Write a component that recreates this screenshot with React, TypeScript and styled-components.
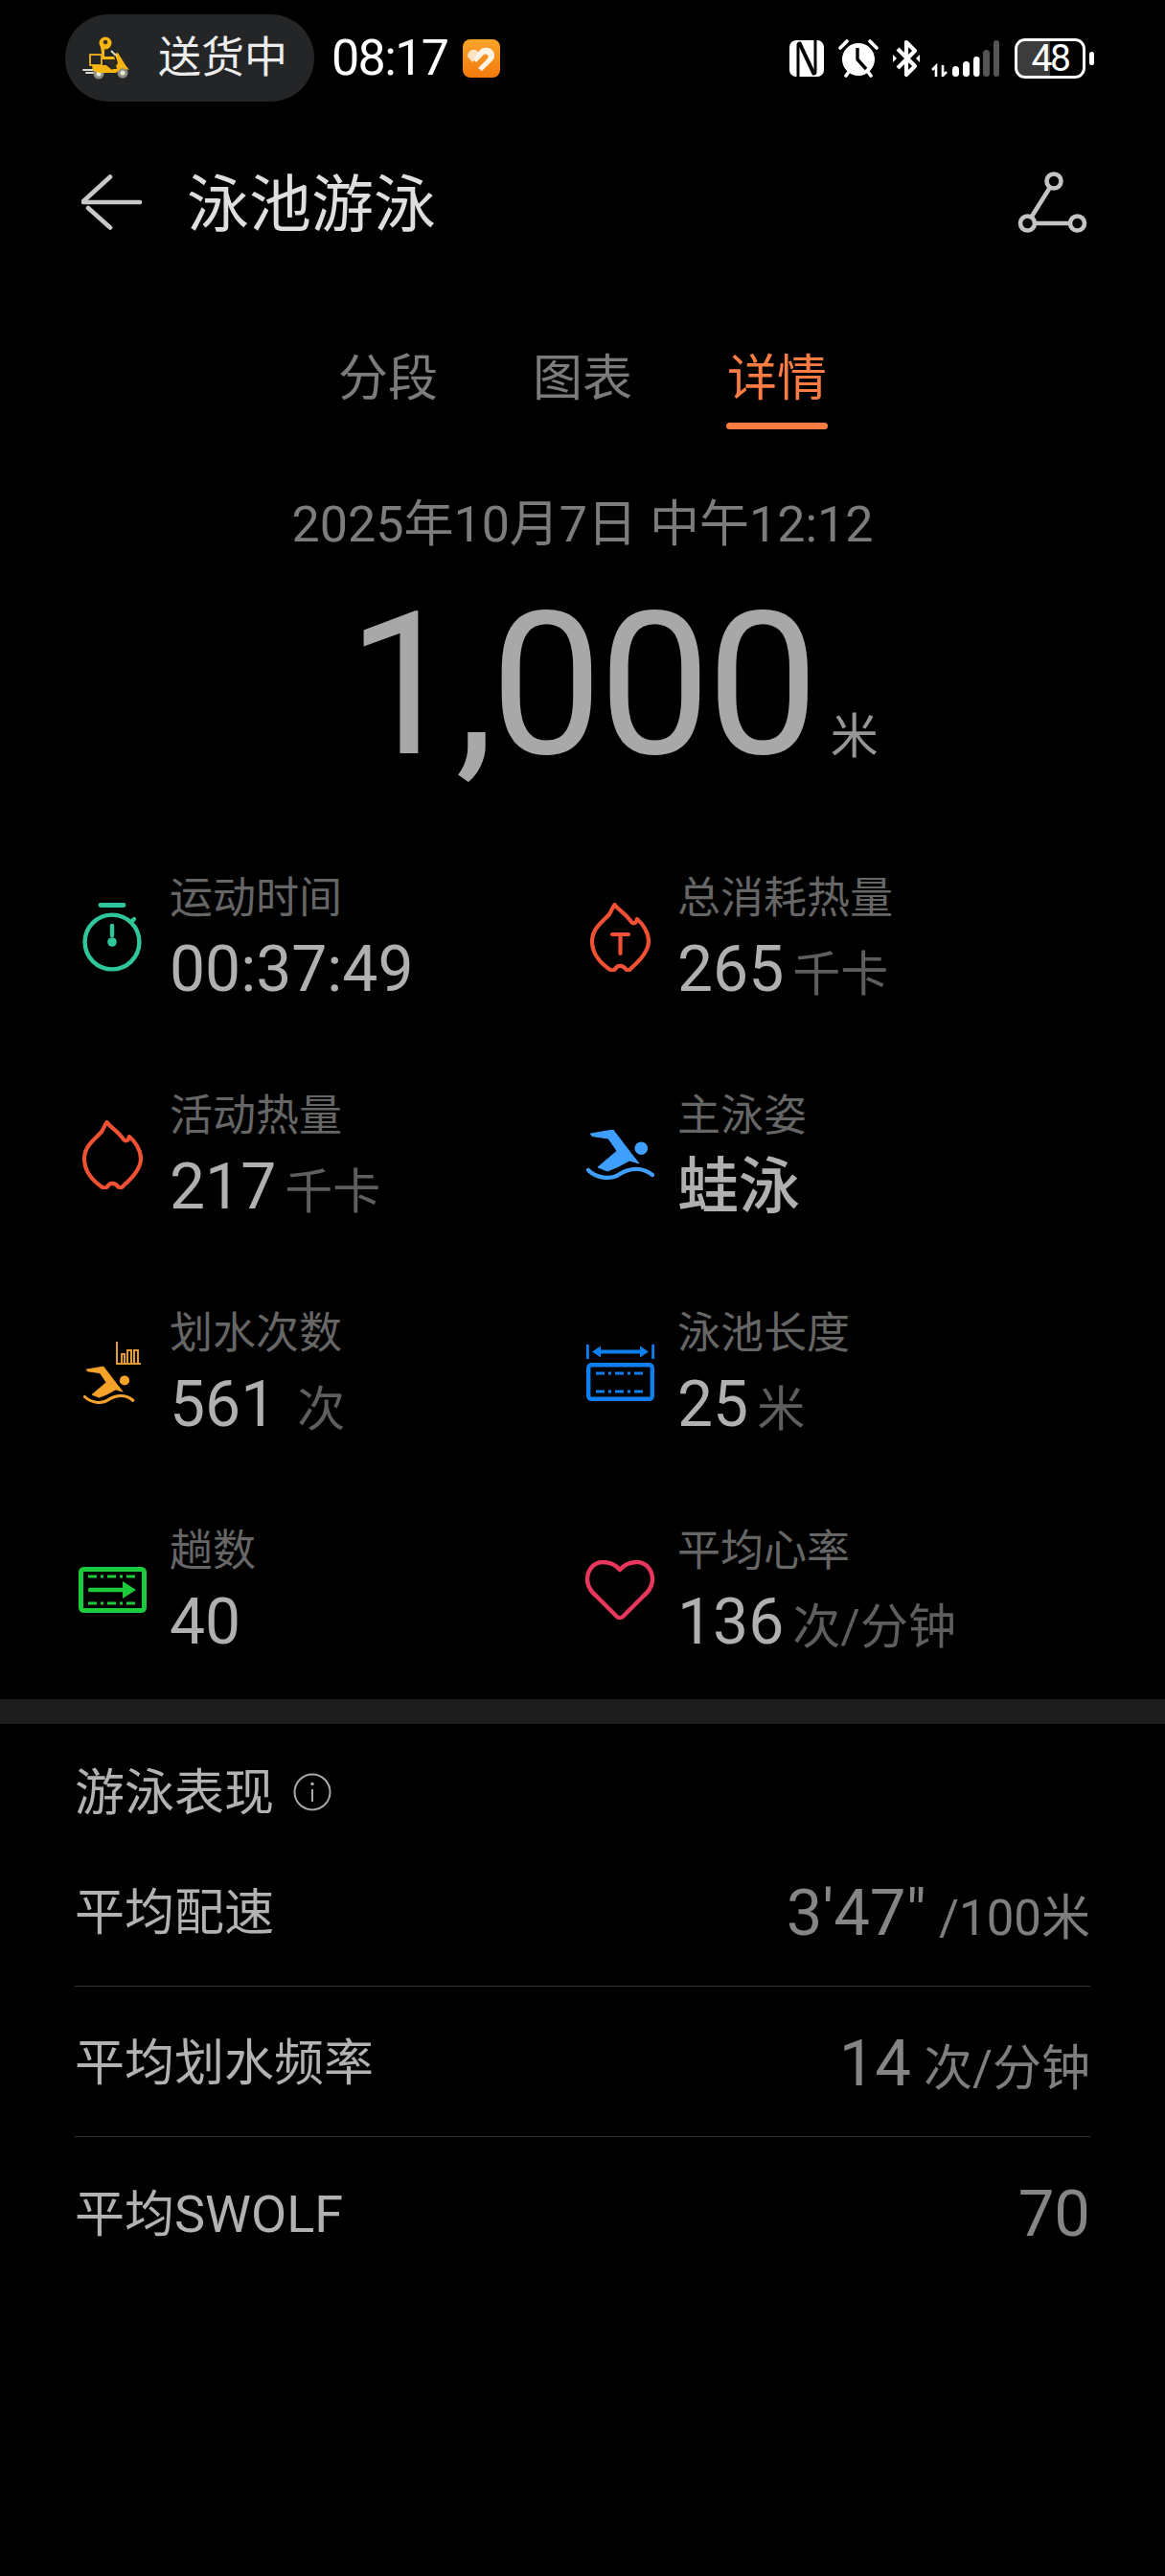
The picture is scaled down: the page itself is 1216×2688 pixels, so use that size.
import React from "react";
import styled, { createGlobalStyle } from "styled-components";

const Global = createGlobalStyle`
  html, body { margin: 0; padding: 0; background: #000; }
  body { font-family: Roboto, "Noto Sans CJK SC", sans-serif; }
  * { box-sizing: border-box; }
`;

const Page = styled.div`
  width: 1216px;
  height: 2688px;
  background: #000;
  overflow: hidden;
`;

const StatusBar = styled.div`
  height: 121px;
  padding: 15px 74px 15px 68px;
  display: flex;
  align-items: center;
`;
const Pill = styled.div`
  width: 260px;
  height: 91px;
  border-radius: 46px;
  background: #242527;
  display: flex;
  align-items: center;
  padding-left: 17px;
  gap: 30px;
`;
const PillText = styled.span`
  font-size: 45px;
  line-height: 60px;
  color: #ececec;
`;
const Clock = styled.span`
  margin-left: 18px;
  font-size: 52px;
  line-height: 60px;
  letter-spacing: -1.6px;
  color: #fff;
`;
const AppBadge = styled.svg`
  margin-left: 15px;
  display: block;
`;
const StatusIcons = styled.div`
  margin-left: auto;
  display: flex;
  align-items: center;
`;
const StatusGlyph = styled.svg<{ $ml: number }>`
  display: block;
  margin-left: ${(p) => p.$ml}px;
`;
const BatteryWrap = styled.div`
  margin-left: 16px;
  display: flex;
  align-items: center;
  gap: 4px;
`;
const BatteryBody = styled.div`
  width: 74px;
  height: 42px;
  border: 3px solid #fff;
  border-radius: 11px;
  background: linear-gradient(90deg, #3c3c3c 50%, transparent 50%);
  background-clip: padding-box;
  display: flex;
  align-items: center;
  justify-content: center;
  font-size: 39px;
  line-height: 36px;
  letter-spacing: -2.4px;
  color: #fff;
`;
const BatteryCap = styled.div`
  width: 5px;
  height: 14px;
  border-radius: 3px;
  background: #fff;
`;

const NavBar = styled.div`
  margin-top: 30px;
  height: 120px;
  padding: 0 81px 0 85px;
  display: flex;
  align-items: center;
`;
const Title = styled.h1`
  margin: 6px 0 0 47px;
  font-size: 65px;
  line-height: 80px;
  font-weight: 400;
  color: #dedede;
`;
const NavAction = styled.svg`
  margin-left: auto;
  display: block;
`;

const Tabs = styled.div`
  margin-top: 95px;
  display: flex;
  justify-content: center;
  gap: 97px;
`;
const Tab = styled.div<{ $active?: boolean }>`
  width: 106px;
  display: flex;
  flex-direction: column;
  align-items: center;
  font-size: 52px;
  line-height: 60px;
  white-space: nowrap;
  color: ${(p) => (p.$active ? "#fb7c43" : "#7c7c7c")};
`;
const TabMark = styled.div<{ $active?: boolean }>`
  width: 100%;
  height: 7px;
  margin-top: 15px;
  border-radius: 4px;
  background: ${(p) => (p.$active ? "#fb7c43" : "transparent")};
`;

const DateLine = styled.div`
  margin-top: 70px;
  text-align: center;
  font-size: 52px;
  line-height: 60px;
  color: #7c7c7c;
`;
const Distance = styled.div`
  margin-top: 33px;
  height: 208px;
  display: flex;
  justify-content: center;
  align-items: baseline;
  padding-left: 63px;
`;
const DistanceValue = styled.span`
  font-size: 208px;
  line-height: 208px;
  letter-spacing: -4px;
  color: #a8a8a8;
`;
const DistanceUnit = styled.span`
  margin-left: 16px;
  font-size: 50px;
  line-height: 60px;
  color: #969696;
`;

const StatGrid = styled.div`
  margin-top: 93px;
  padding-left: 78px;
  display: grid;
  grid-template-columns: 530px 530px;
  grid-auto-rows: 136px;
  row-gap: 91px;
`;
const Stat = styled.div`
  display: flex;
  align-items: center;
`;
const IconCell = styled.div`
  width: 78px;
  height: 100%;
  padding-bottom: 4px;
  display: flex;
  align-items: center;
  justify-content: center;
  flex: none;
`;
const StatText = styled.div`
  margin-left: 21px;
`;
const StatLabel = styled.div`
  font-size: 45px;
  line-height: 52px;
  color: #666;
`;
const StatValue = styled.div`
  margin-top: 12px;
  height: 72px;
  display: flex;
  align-items: baseline;
  white-space: nowrap;
`;
const Number = styled.span<{ $strong?: boolean }>`
  font-size: ${(p) => (p.$strong ? 64 : 66)}px;
  font-weight: ${(p) => (p.$strong ? 500 : 400)};
  line-height: 72px;
  color: #b0b0b0;
`;
const Unit = styled.span<{ $gap: number }>`
  margin-left: ${(p) => p.$gap}px;
  font-size: 50px;
  line-height: 60px;
  color: #5e5e5e;
`;

const Band = styled.div`
  margin-top: 44px;
  height: 26px;
  background: #1c1c1c;
`;

const Section = styled.section`
  padding: 41px 78px 0;
`;
const SectionHead = styled.div`
  height: 76px;
  padding-bottom: 16px;
  display: flex;
  align-items: center;
  gap: 20px;
`;
const SectionTitle = styled.h2`
  margin: 4px 0 0;
  font-size: 52px;
  line-height: 60px;
  font-weight: 400;
  color: #b2b2b2;
`;
const InfoIcon = styled.svg`
  display: block;
`;
const Row = styled.div<{ $last?: boolean }>`
  height: 157px;
  display: flex;
  align-items: center;
  justify-content: space-between;
  border-bottom: 1px solid ${(p) => (p.$last ? "transparent" : "#333")};
`;
const RowLabel = styled.span`
  margin-top: 6px;
  font-size: 52px;
  line-height: 60px;
  color: #b2b2b2;
`;
const LatinLabel = styled.span`
  font-size: 54px;
`;
const RowValue = styled.span`
  margin-top: 4px;
  display: flex;
  align-items: baseline;
`;
const RowNumber = styled.span`
  font-size: 67px;
  line-height: 72px;
  color: #858585;
`;
const RowUnit = styled.span`
  margin-left: 13px;
  font-size: 51px;
  line-height: 60px;
  color: #7e7e7e;
`;

const BackArrow = () => (
  <svg width="63" height="58" viewBox="0 0 63 58" fill="none" stroke="#c8c8c8" strokeWidth="4.6" strokeLinecap="round">
    <path d="M2 29H61" />
    <path d="M30 2.5L2 28" />
    <path d="M7 35L30 55.5" />
  </svg>
);

const Route = () => (
  <NavAction width="73" height="64" viewBox="0 0 73 64" fill="none" stroke="#c4c4c4" strokeWidth="4.6">
    <circle cx="38" cy="10" r="7.5" />
    <circle cx="10.5" cy="54" r="7.5" />
    <circle cx="62.5" cy="54" r="7.5" />
    <path d="M34 16.5L14.5 47.5M18 54H55" />
  </NavAction>
);

const Rider = () => (
  <svg width="50" height="45" viewBox="0 0 50 45">
    <path d="M2 35H12M5 38H14" stroke="#d9d9d0" strokeWidth="2" strokeLinecap="round" />
    <rect x="9" y="19" width="12" height="11" fill="none" stroke="#e0a41c" strokeWidth="2" />
    <circle cx="18" cy="39" r="5.5" fill="#8d8d80" />
    <circle cx="18" cy="39" r="2.5" fill="#e6e6da" />
    <circle cx="43" cy="38" r="5.5" fill="#8d8d80" />
    <circle cx="43" cy="38" r="2.5" fill="#e6e6da" />
    <path d="M11 30H26L32 35L38 28L35 18L38 17L46 30L50 35L42 33L36 38H20L12 36Z" fill="#f7b512" />
    <path d="M24 21H34L37 34H31L29 27H24Z" fill="#2f2c26" />
    <path d="M20 11L24 12V21L34 21L35 24H22Z" fill="#f7b512" />
    <circle cx="25" cy="7" r="6.5" fill="#f7b512" />
    <circle cx="25" cy="6" r="2.3" fill="#3a3326" />
    <path d="M31 15L36 20" stroke="#d8d8cc" strokeWidth="2" />
  </svg>
);

const HealthBadge = () => (
  <AppBadge width="39" height="40" viewBox="0 0 39 40">
    <defs>
      <linearGradient id="badge" x1="0" y1="0" x2="0" y2="1">
        <stop offset="0" stopColor="#fba42a" />
        <stop offset="1" stopColor="#f27a0c" />
      </linearGradient>
    </defs>
    <rect width="39" height="40" rx="8" fill="url(#badge)" />
    <path d="M5 18C5 12 11 9 15 12L18 15L10 24Z" fill="#ffe2c2" />
    <path d="M18 11C24 6 34 10 33 18C33 21 30 23 27 26L20 33L16 30L26 20C28 16 24 14 21 17L14 24L11 21Z" fill="#fff3e6" />
  </AppBadge>
);

const Nfc = () => (
  <StatusGlyph $ml={0} width="36" height="38" viewBox="0 0 36 38">
    <rect width="36" height="38" rx="7" fill="#fff" />
    <path d="M9 38V5Q9 3 11 3L26 35" fill="none" stroke="#000" strokeWidth="3" />
    <path d="M27 0V33Q27 35 25 35L10 3" fill="none" stroke="#000" strokeWidth="3" />
  </StatusGlyph>
);

const Alarm = () => (
  <StatusGlyph $ml={15} width="42" height="40" viewBox="0 0 42 40">
    <circle cx="21" cy="21" r="17" fill="#fff" />
    <path d="M20 9V21L29 31" fill="none" stroke="#000" strokeWidth="3.4" />
    <path d="M2 9L9 2M33 2L40 9M8 38L11 34M34 38L31 34" stroke="#fff" strokeWidth="3.6" strokeLinecap="round" />
  </StatusGlyph>
);

const Bluetooth = () => (
  <StatusGlyph $ml={15} width="28" height="40" viewBox="0 0 28 40">
    <path d="M5 10L23 28L14 37V3L23 12L5 30" fill="none" stroke="#fff" strokeWidth="4.2" strokeLinejoin="round" />
    <path d="M0 16L4 20L0 24ZM28 16L24 20L28 24Z" fill="#fff" />
  </StatusGlyph>
);

const Signal = () => (
  <StatusGlyph $ml={12} width="71" height="38" viewBox="0 0 71 38">
    <path d="M5 38V27L1 31M12 26V37L16 33" fill="none" stroke="#fff" strokeWidth="2.6" />
    <rect x="22" y="27" width="7" height="11" rx="3.5" fill="#fff" />
    <rect x="33" y="22" width="7" height="16" rx="3.5" fill="#fff" />
    <rect x="44" y="17" width="6.5" height="21" rx="3.2" fill="#fff" />
    <rect x="54" y="10" width="7" height="28" rx="3.5" fill="#555" />
    <rect x="65" y="0" width="6" height="38" rx="3" fill="#555" />
  </StatusGlyph>
);

const Stopwatch = () => (
  <svg width="62" height="72" viewBox="0 0 62 72" fill="none" stroke="#2ec69a" strokeWidth="4.4" strokeLinecap="round">
    <circle cx="31" cy="41" r="28.4" />
    <path d="M19 2.5H43" strokeWidth="4.8" />
    <path d="M51 20L54 17" />
    <path d="M31 24V34" />
    <circle cx="31" cy="41" r="4.8" fill="#2ec69a" stroke="none" />
  </svg>
);

const flame =
  "M25.5 2C29 7 38 12 43 20C45 22 48 22 49 17C55 22 61 31 61 40C61 52 50 62 43 68C41 71 39 71 37 69C34 65 29 65 27 68C25 71 23 71 21 70C12 64 2 54 2 40C2 27 12 21 20 12C22 9 23 5 25.5 2Z";

const Flame = ({ total }: { total?: boolean }) => (
  <svg width="63" height="72" viewBox="0 0 63 72" fill="none" stroke="#f05033" strokeWidth="4.2" strokeLinejoin="round" strokeLinecap="round">
    <path d={flame} />
    {total && <path d="M23 33H40M31.5 33V53" />}
  </svg>
);

const SwimmerShape = ({ color }: { color: string }) => (
  <>
    <path
      d="M4.3 4L28 0L47 25L55 35L45 32L33 38.5L22 43L12 39L32 22L23 9L6 6.5Z"
      fill={color}
      stroke={color}
      strokeWidth="1"
      strokeLinejoin="round"
    />
    <circle cx="57.3" cy="19.3" r="6.8" fill={color} />
    <path d="M2 42C10 50 25 53 35 46C45 40 58 38 69 47" fill="none" stroke={color} strokeWidth="4.2" strokeLinecap="round" />
  </>
);

const BlueSwimmer = () => (
  <svg width="71" height="53" viewBox="0 0 71 53">
    <SwimmerShape color="#3f9fff" />
  </svg>
);

const StrokeSwimmer = () => (
  <svg width="60" height="67" viewBox="0 0 60 67">
    <g transform="translate(0 27) scale(0.75)">
      <SwimmerShape color="#f7a229" />
    </g>
    <path
      d="M35 1V24H60M40 24V14H43V24M46 24V10H50V24M53 24V10H57V24"
      fill="none"
      stroke="#e39a35"
      strokeWidth="2"
    />
  </svg>
);

const PoolLength = () => (
  <svg width="71" height="59" viewBox="0 0 71 59" fill="none">
    <path d="M1.4 0V15M69.6 0V15" stroke="#0f7ff0" strokeWidth="2.8" />
    <path d="M10 7.5H61" stroke="#0f7ff0" strokeWidth="3.8" />
    <path d="M6 7.5L15 1.5V13.5ZM65 7.5L56 1.5V13.5Z" fill="#0f7ff0" />
    <rect x="2.2" y="21.2" width="66.6" height="35.6" rx="3" stroke="#0f7ff0" strokeWidth="4.4" />
    <path d="M10 30H62M10 49H62" stroke="#0f7ff0" strokeWidth="3" strokeDasharray="9 4 3 4" />
  </svg>
);

const Laps = () => (
  <svg width="71" height="48" viewBox="0 0 71 48" fill="none">
    <rect x="2.5" y="2.5" width="66" height="43" rx="3" stroke="#1ccb3b" strokeWidth="5" />
    <path d="M10 10H62M10 38H62" stroke="#1ccb3b" strokeWidth="3" strokeDasharray="9 4 3 4" />
    <path d="M12 24H48" stroke="#1ccb3b" strokeWidth="4.4" strokeLinecap="round" />
    <path d="M46 15L60 24L46 33Z" fill="#1ccb3b" />
  </svg>
);

const Heart = () => (
  <svg width="72" height="63" viewBox="0 0 72 63" fill="none" stroke="#e8365d" strokeWidth="4.4" strokeLinejoin="round">
    <path d="M36 10C31 4 24 2 18 2C9 2 2 10 2 20C2 27 6 33 12 38L33 59C34.5 60.5 37.5 60.5 39 59L60 38C66 33 70 27 70 20C70 10 63 2 54 2C48 2 41 4 36 10Z" />
  </svg>
);

type StatItem = {
  icon: React.ReactNode;
  label: string;
  value: string;
  unit?: string;
  gap?: number;
  strong?: boolean;
};

const stats: StatItem[] = [
  { icon: <Stopwatch />, label: "运动时间", value: "00:37:49" },
  { icon: <Flame total />, label: "总消耗热量", value: "265", unit: "千卡", gap: 9 },
  { icon: <Flame />, label: "活动热量", value: "217", unit: "千卡", gap: 9 },
  { icon: <BlueSwimmer />, label: "主泳姿", value: "蛙泳", strong: true },
  { icon: <StrokeSwimmer />, label: "划水次数", value: "561", unit: "次", gap: 22 },
  { icon: <PoolLength />, label: "泳池长度", value: "25", unit: "米", gap: 9 },
  { icon: <Laps />, label: "趟数", value: "40" },
  { icon: <Heart />, label: "平均心率", value: "136", unit: "次/分钟", gap: 9 },
];

const rows: { label: React.ReactNode; key: string; value: string; unit?: string }[] = [
  { key: "pace", label: "平均配速", value: "3'47\"", unit: "/100米" },
  { key: "rate", label: "平均划水频率", value: "14", unit: "次/分钟" },
  {
    key: "swolf",
    label: (
      <>
        平均<LatinLabel>SWOLF</LatinLabel>
      </>
    ),
    value: "70",
  },
];

export default function App() {
  return (
    <Page>
      <Global />
      <StatusBar>
        <Pill>
          <Rider />
          <PillText>送货中</PillText>
        </Pill>
        <Clock>08:17</Clock>
        <HealthBadge />
        <StatusIcons>
          <Nfc />
          <Alarm />
          <Bluetooth />
          <Signal />
          <BatteryWrap>
            <BatteryBody>48</BatteryBody>
            <BatteryCap />
          </BatteryWrap>
        </StatusIcons>
      </StatusBar>

      <NavBar>
        <BackArrow />
        <Title>泳池游泳</Title>
        <Route />
      </NavBar>

      <Tabs>
        {["分段", "图表", "详情"].map((t, i) => (
          <Tab key={t} $active={i === 2}>
            {t}
            <TabMark $active={i === 2} />
          </Tab>
        ))}
      </Tabs>

      <DateLine>2025年10月7日 中午12:12</DateLine>
      <Distance>
        <DistanceValue>1,000</DistanceValue>
        <DistanceUnit>米</DistanceUnit>
      </Distance>

      <StatGrid>
        {stats.map((s) => (
          <Stat key={s.label}>
            <IconCell>{s.icon}</IconCell>
            <StatText>
              <StatLabel>{s.label}</StatLabel>
              <StatValue>
                <Number $strong={s.strong}>{s.value}</Number>
                {s.unit && <Unit $gap={s.gap ?? 9}>{s.unit}</Unit>}
              </StatValue>
            </StatText>
          </Stat>
        ))}
      </StatGrid>

      <Band />

      <Section>
        <SectionHead>
          <SectionTitle>游泳表现</SectionTitle>
          <InfoIcon width="40" height="40" viewBox="0 0 40 40" fill="none" stroke="#a8a8a8" strokeWidth="2">
            <circle cx="20" cy="20" r="18.5" />
            <path d="M20 17V30" />
            <circle cx="20" cy="11.5" r="1.8" fill="#a8a8a8" stroke="none" />
          </InfoIcon>
        </SectionHead>
        {rows.map((r, i) => (
          <Row key={r.key} $last={i === rows.length - 1}>
            <RowLabel>{r.label}</RowLabel>
            <RowValue>
              <RowNumber>{r.value}</RowNumber>
              {r.unit && <RowUnit>{r.unit}</RowUnit>}
            </RowValue>
          </Row>
        ))}
      </Section>
    </Page>
  );
}
